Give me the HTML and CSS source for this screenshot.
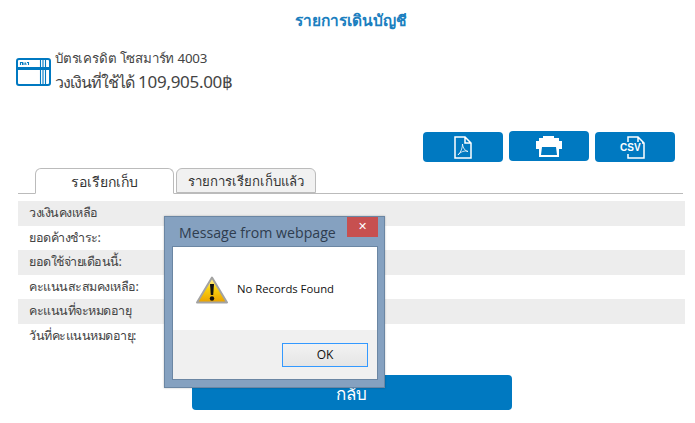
FILE: index.html
```html
<!DOCTYPE html>
<html lang="th">
<head>
<meta charset="utf-8">
<title>รายการเดินบัญชี</title>
<link rel="stylesheet" href="styles.css">
</head>
<body>
<main class="page">
  <h1 class="title">รายการเดินบัญชี</h1>
  <section class="account">
    <svg class="card-icon" viewBox="0 0 35 28" width="35" height="28" aria-hidden="true">
      <rect x="1" y="1" width="33" height="26" rx="2" fill="#fff" stroke="#0079c1" stroke-width="2"/>
      <rect x="1" y="9" width="33" height="3" fill="#0079c1"/>
      <path d="M4.500 7V4.500h2V7M8 7V4.500M9.500 4.500 10 7M11 4.500h1.500V7" fill="none" stroke="#0079c1" stroke-width="1.100"/>
      <path d="M24.500 2v7M27 2v7M29.500 2v7M24.500 12v14M27 12v14M29.500 12v14" stroke="#0079c1" stroke-width="1.100"/>
    </svg>
    <div class="account-text">
      <div class="account-name">บัตรเครดิต โซสมาร์ท 4003</div>
      <div class="account-limit"><span class="limit-label">วงเงินที่ใช้ได้</span> 109,905.00฿</div>
    </div>
  </section>
  <div class="actions">
    <button class="action" type="button" aria-label="PDF">
      <svg viewBox="0 0 18 23" width="18" height="23" fill="none" stroke="#fff"><path d="M1 1h10l6 6v15H1zM11 1v6h6" stroke-width="1.500"/><path d="M8.500 8c0 4-1.500 8-4.500 11 2-3 7-5 10-3.500-3-.5-5-3.500-5.500-7.500z" stroke-width=".8"/></svg>
    </button>
    <button class="action action-raised" type="button" aria-label="Print">
      <svg viewBox="0 0 26 22" width="26" height="22" aria-hidden="true"><path d="M7 1h11v2h5v3h3v8h-3v8H3v-8H0V6h3V3h4z" fill="#fff"/><path d="M6 12h14l1 8H5z" fill="#0079c1"/></svg>
    </button>
    <button class="action" type="button" aria-label="CSV">
      <span class="csv-wrap">
        <svg viewBox="0 0 18 23" width="18" height="23" fill="none" stroke="#fff" stroke-width="1.500"><path d="M1 6V1h10l6 6v15H1v-4M11 1v6h6"/></svg>
        <span class="csv-label">CSV</span>
      </span>
    </button>
  </div>
  <nav class="tabs">
    <div class="tab tab-active">รอเรียกเก็บ</div>
    <div class="tab tab-idle">รายการเรียกเก็บแล้ว</div>
  </nav>
  <ul class="rows">
    <li class="row">วงเงินคงเหลือ</li>
    <li class="row">ยอดค้างชำระ:</li>
    <li class="row">ยอดใช้จ่ายเดือนนี้:</li>
    <li class="row">คะแนนสะสมคงเหลือ:</li>
    <li class="row">คะแนนที่จะหมดอายุ</li>
    <li class="row">วันที่คะแนนหมดอายุ:</li>
  </ul>
  <button class="back" type="button">กลับ</button>
</main>

<div class="dialog" role="dialog">
  <div class="dialog-head">
    <span class="dialog-title">Message from webpage</span>
    <span class="dialog-close">✕</span>
  </div>
  <div class="dialog-inner">
    <div class="dialog-body">
      <svg class="warn" viewBox="0 0 32 28" width="32" height="28" aria-hidden="true">
        <defs><linearGradient id="warnFill" x1="0" y1="0" x2="0" y2="1"><stop offset="0" stop-color="#fff4b0"/><stop offset=".45" stop-color="#fbd20f"/><stop offset="1" stop-color="#e9a000"/></linearGradient></defs>
        <path d="M16 1.500 31 26.500H1z" fill="url(#warnFill)" stroke="#a3a3a3" stroke-width="2" stroke-linejoin="round"/>
        <path d="M14 8h4l-.8 11h-2.400z" fill="#111"/>
        <circle cx="16" cy="22.500" r="2.200" fill="#111"/>
      </svg>
      <span class="dialog-msg">No Records Found</span>
    </div>
    <div class="dialog-foot">
      <button class="ok" type="button">OK</button>
    </div>
  </div>
</div>
</body>
</html>
```
FILE: styles.css
```css
* { box-sizing: border-box; }
html, body { margin: 0; padding: 0; }
body {
  width: 695px;
  height: 423px;
  overflow: hidden;
  background: #fff;
  position: relative;
  font-family: "Noto Sans", "Open Sans", "DejaVu Sans", sans-serif;
  color: #444;
}
.page { display: flex; flex-direction: column; height: 423px; }
.title {
  margin: 10px 0 0;
  font-size: 15.500px;
  line-height: 20px;
  font-weight: 600;
  color: #1b7fbf;
  text-align: center;
  padding-left: 7px;
}
.account {
  display: flex;
  align-items: flex-start;
  margin: 18px 0 0 16px;
  height: 48px;
}
.card-icon { margin-top: 10px; flex: none; }
.account-text { margin-left: 4px; }
.account-name { font-size: 13.300px; line-height: 20px; letter-spacing: -.2px; }
.account-limit { font-size: 17px; line-height: 26px; margin-top: 1px; letter-spacing: -.3px; }
.limit-label { font-size: 16px; letter-spacing: -1px; }
.actions {
  display: flex;
  gap: 6px;
  justify-content: flex-end;
  margin: 35px 20px 0 0;
  height: 31px;
}
.action {
  width: 80px;
  height: 30px;
  margin-top: 1px;
  padding: 0;
  border: 0;
  border-radius: 4px;
  background: #0079c1;
  display: flex;
  align-items: center;
  justify-content: center;
}
.action-raised { margin-top: 0; }
.csv-wrap { position: relative; display: block; width: 18px; height: 23px; margin-left: 2px; }
.csv-label {
  position: absolute;
  left: -8px;
  top: 6px;
  font: bold 10px/11px "Liberation Sans", sans-serif;
  color: #fff;
  background: #0079c1;
  padding: 0 1px;
}
.tabs {
  display: flex;
  gap: 2px;
  margin: 6px 0 0 18px;
  padding-left: 17px;
  height: 26px;
  border-bottom: 1px solid #bbb;
  width: 665px;
}
.tab {
  width: 139px;
  height: 26px;
  border: 1px solid #bbb;
  border-radius: 6px 6px 0 0;
  font-size: 14px;
  line-height: 25px;
  text-align: center;
  color: #333;
}
.tab-active { background: #fff; border-bottom-color: #fff; }
.tab-idle { width: 140px; height: 25px; background: #f1f1f1; font-size: 13.200px; }
.rows {
  list-style: none;
  margin: 7px 0 0 18px;
  padding: 0;
  width: 667px;
}
.row {
  height: 24.500px;
  padding-left: 11px;
  font-size: 12.500px;
  line-height: 23px;
  letter-spacing: -.5px;
  color: #444;
}
.row:nth-child(odd) { background: #ededed; }
.back {
  display: block;
  width: 320px;
  height: 35px;
  margin: 27px 0 0 192px;
  padding: 3px 2px 0 0;
  border: 0;
  border-radius: 4px;
  background: #0079c1;
  color: #fff;
  font-family: inherit;
  font-size: 17px;
  line-height: 28px;
}
.dialog {
  position: absolute;
  left: 164px;
  top: 216px;
  width: 221px;
  height: 172px;
  padding: 0 6px 7px 7px;
  background: #85a1c0;
  border: 1px solid #6b86a3;
  box-shadow: 0 0 2px rgba(0, 0, 0, .25);
  display: flex;
  flex-direction: column;
}
.dialog-head { position: relative; height: 29px; flex: none; }
.dialog-title {
  display: block;
  margin: 6px 0 0 7px;
  font: 14.150px/20px "Open Sans", "Noto Sans", sans-serif;
  color: #2f3d4f;
}
.dialog-close {
  position: absolute;
  right: 0;
  top: 0;
  width: 31px;
  height: 20px;
  background: #c75050;
  color: #fff;
  font: bold 11px/20px "DejaVu Sans", sans-serif;
  text-align: center;
}
.dialog-inner {
  flex: 1;
  display: flex;
  flex-direction: column;
  background: #fff;
  border: 1px solid #6b86a3;
}
.dialog-body {
  flex: 1;
  display: flex;
  align-items: flex-start;
  padding: 29px 0 0 23px;
}
.warn { flex: none; }
.dialog-msg {
  margin: 5px 0 0 9px;
  font: 11.300px/16px "Open Sans", "Noto Sans", sans-serif;
  color: #111;
}
.dialog-foot {
  height: 49px;
  flex: none;
  background: #f0f0f0;
  padding: 13px 9px 0 0;
  display: flex;
  justify-content: flex-end;
}
.ok {
  width: 86px;
  height: 24px;
  padding: 0;
  border: 1px solid #3399ff;
  background: linear-gradient(#f2f2f2, #e5e5e5);
  font: 12px/20px "Open Sans", "Noto Sans", sans-serif;
  color: #111;
}
```
